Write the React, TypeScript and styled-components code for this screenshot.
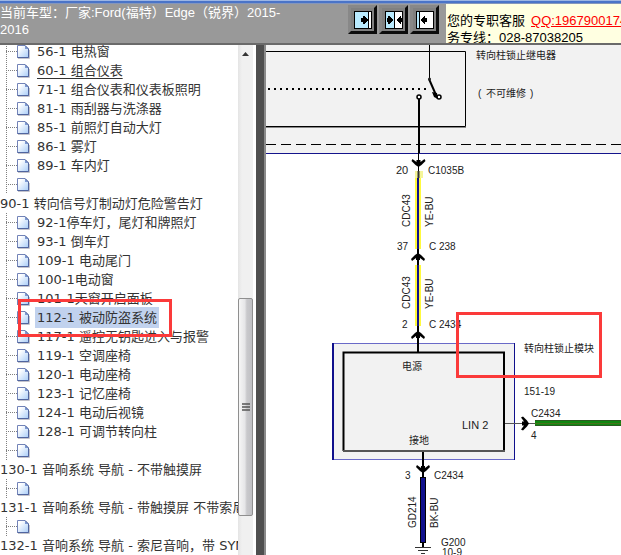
import React from 'react';
import styled, { createGlobalStyle } from 'styled-components';

const GlobalStyle = createGlobalStyle`
  * { box-sizing: border-box; }
  html, body { margin: 0; overflow: hidden; }
`;

const Page = styled.div`
  display: flex;
  flex-direction: column;
  height: 100vh;
  background: #fff;
  font-family: 'Liberation Sans', 'Noto Sans CJK SC', sans-serif;
  font-size: 13px;
  line-height: 17px;
`;

const TopEdge = styled.div`
  flex: none;
  height: 4px;
  background: linear-gradient(#9db6e4 0 1px, #4a74c8 1px 3px, #8496bc 3px);
`;

const Header = styled.header`
  display: flex;
  flex: none;
  height: 41px;
  overflow: hidden;
  background: #999;
  border-bottom: 2px solid #6a6a6a;
`;

const VehicleTitle = styled.h1`
  flex: 1;
  margin: 0;
  color: #fff;
  font-size: 13px;
  font-weight: 400;
  white-space: nowrap;
`;

const Toolbar = styled.div`
  display: flex;
  gap: 2px;
  padding: 1px 7px 0 0;
`;

const ToolButton = styled.button`
  display: flex;
  align-items: center;
  justify-content: center;
  width: 29px;
  height: 29px;
  padding: 0;
  background: #808080;
  border: 3px solid;
  border-color: #888 #0c0c0c #0c0c0c #888;
`;

const Contact = styled.div`
  width: 175px;
  padding-top: 8px;
  padding-left: 1px;
  overflow: hidden;
  background: #ffffe1;
  color: #000;
  white-space: nowrap;
`;

const ContactLine = styled.div`
  display: flex;
  gap: 6px;
`;

const QQLink = styled.a`
  color: #f00;
  text-decoration: underline;
`;

const Main = styled.main`
  display: flex;
  flex: 1;
  min-height: 0;
`;

const Sidebar = styled.aside`
  display: flex;
  flex: none;
  width: 256px;
  padding-right: 3px;
`;

const TreeView = styled.nav`
  flex: 1;
  min-width: 0;
  overflow: hidden;
  color: #333;
  font-family: 'DejaVu Sans', 'Noto Sans CJK SC', sans-serif;
  line-height: 19px;
  white-space: nowrap;
`;

const TreeGroups = styled.ul`
  margin: -3px 0 0;
  padding: 0;
  list-style: none;
`;

const GroupTitle = styled.div`
  height: 19px;
`;

const Leaves = styled.ul`
  margin: 0 0 0 6px;
  padding: 0;
  list-style: none;
  background: repeating-linear-gradient(#808080 0 1px, transparent 1px 2px) left / 1px 100% no-repeat;
`;

const Leaf = styled.li`
  display: flex;
  align-items: center;
  height: 19px;
`;

const Branch = styled.span`
  flex: none;
  width: 11px;
  height: 1px;
  background: repeating-linear-gradient(90deg, #808080 0 1px, transparent 1px 2px);
`;

const PageGlyph = styled.svg`
  flex: none;
  margin-right: 5px;
`;

const LeafLink = styled.a<{ $selected?: boolean; $underlined?: boolean }>`
  position: relative;
  padding: 0 2px;
  color: inherit;
  line-height: 21px;
  text-decoration: none;
  background: ${(p) => (p.$selected ? '#c1d2ee' : 'transparent')};
  ${(p) => p.$underlined && 'text-decoration: underline; text-underline-offset: 3px;'}
`;

const Marker = styled.span`
  position: absolute;
  z-index: 1;
  inset: -8px -13px -9px -17px;
  border: 3px solid #fb3a3a;
`;

const Scrollbar = styled.div`
  display: flex;
  flex: none;
  flex-direction: column;
  width: 15px;
  background: linear-gradient(90deg, #e4e4e4, #f0f0f0 4px);
`;

const ScrollArrow = styled.button`
  display: flex;
  align-items: center;
  justify-content: center;
  height: 17px;
  padding: 0;
  background: none;
  border: 0;
`;

const TrackPart = styled.div<{ $share: number }>`
  flex: ${(p) => p.$share} 0 0;
`;

const Thumb = styled.div`
  display: flex;
  flex: 217 0 0;
  align-items: center;
  justify-content: center;
  border: 1px solid #8f8f8f;
  border-radius: 2px;
  background: linear-gradient(90deg, #f6f6f6, #e6e6e8 45%, #c9c9cc 60%, #c0c0c4);
`;

const Splitter = styled.div`
  flex: none;
  width: 10px;
  background: #4f4f4f;
  border-right: 2px solid #8a8a8a;
`;

const DiagramPane = styled.section`
  flex: 1;
  min-width: 0;
  overflow: hidden;
  background: linear-gradient(#f2f2f2 108px, #fff 108px);
`;

const Drawing = styled.svg`
  display: block;
  fill: #222;
  font-family: 'Liberation Sans', 'Noto Sans CJK SC', sans-serif;
  font-size: 10px;
`;

interface LeafData {
  label: string;
  selected?: boolean;
  underlined?: boolean;
}

interface GroupData {
  title?: string;
  leaves: LeafData[];
}

const groups: GroupData[] = [
  {
    leaves: [
      { label: '56-1 电热窗' },
      { label: '60-1 组合仪表', underlined: true },
      { label: '71-1 组合仪表和仪表板照明' },
      { label: '81-1 雨刮器与洗涤器' },
      { label: '85-1 前照灯自动大灯' },
      { label: '86-1 雾灯' },
      { label: '89-1 车内灯' },
      { label: '' },
    ],
  },
  {
    title: '90-1 转向信号灯制动灯危险警告灯',
    leaves: [
      { label: '92-1停车灯，尾灯和牌照灯' },
      { label: '93-1 倒车灯' },
      { label: '109-1 电动尾门' },
      { label: '100-1电动窗' },
      { label: '101-1天窗开启面板' },
      { label: '112-1 被动防盗系统', selected: true },
      { label: '117-1 遥控无钥匙进入与报警' },
      { label: '119-1 空调座椅' },
      { label: '120-1 电动座椅' },
      { label: '123-1 记忆座椅' },
      { label: '124-1 电动后视镜' },
      { label: '128-1 可调节转向柱' },
      { label: '' },
    ],
  },
  { title: '130-1 音响系统 导航 - 不带触摸屏', leaves: [{ label: '' }] },
  { title: '131-1 音响系统 导航 - 带触摸屏 不带索尼', leaves: [{ label: '' }] },
  { title: '132-1 音响系统 导航 - 索尼音响，带 SYNC', leaves: [] },
];

function PageIcon() {
  return (
    <PageGlyph width="13" height="14" viewBox="0 0 13 14" aria-hidden="true">
      <defs>
        <linearGradient id="sheet" x1="0" y1="0" x2="1" y2="1">
          <stop offset="0.2" stopColor="#fff" />
          <stop offset="1" stopColor="#a9cdf8" />
        </linearGradient>
      </defs>
      <path d="M1 13.5H12.5V5" fill="none" stroke="#c4c4cc" />
      <path d="M0.5 0.5H8L11.5 4V12.5H0.5Z" fill="url(#sheet)" stroke="#7283b8" />
      <path d="M8 1V4H11Z" fill="#7d9bd6" />
      <path d="M8 0.5L11.5 4V12.5H0.5" fill="none" stroke="#50659f" />
    </PageGlyph>
  );
}

function PanelIcon({ kind }: { kind: 'right' | 'both' | 'left' }) {
  const split = { right: 14, both: 9, left: 3 }[kind];
  return (
    <svg width="18" height="18" viewBox="0 0 18 18" shapeRendering="crispEdges" aria-hidden="true">
      <rect x="0.5" y="0.5" width="17" height="17" fill="#fff" stroke="#000" />
      <rect x="1" y="1" width={split - 1} height="16" fill="#b9ebff" />
      <path d={`M${split + 0.5} 1V17`} stroke="#000" />
      {kind === 'right' && <path d="M7 7H9V5H10L14 9L10 13H9V11H7Z" />}
      {kind === 'both' && <path d="M2 7H3V5H4L8 9L4 13H3V11H2ZM17 7H16V5H15L11 9L15 13H16V11H17Z" />}
      {kind === 'left' && <path d="M11 7H9V5H8L4 9L8 13H9V11H11Z" />}
    </svg>
  );
}

function Arrow({ x, y, angle = 0 }: { x: number; y: number; angle?: number }) {
  return (
    <path
      transform={`translate(${x} ${y}) rotate(${angle})`}
      d="M0 1L-3 -1L-7 -5L-6 -7L-2 -4V-6H2V-4L6 -7L7 -5L3 -1Z"
      fill="#000"
    />
  );
}

function WiringDiagram() {
  return (
    <Drawing width="355" height="510" viewBox="266 45 355 510" role="img" aria-label="转向柱锁止模块电路图">
      <g fill="none" stroke="#000">
        <path d="M266 51.5H465.5V126.5H266" />
        <path d="M266 127.5H466" stroke="#888" />
        <path d="M268 89H428" strokeWidth="2" strokeDasharray="2 4" />
        <path d="M266 144.5H621" strokeDasharray="10 5" />
        <path d="M266 153.5H621" stroke="#14148c" />
        <path d="M429.5 45V79" />
        <path d="M429 79L436 95" strokeWidth="2" />
        <circle cx="439" cy="97" r="2" fill="#fff" strokeWidth="1.5" />
        <circle cx="419" cy="97" r="2" fill="#fff" strokeWidth="1.5" />
        <path d="M419 99V153" strokeWidth="2" />
        <path d="M418.5 153V176" />
      </g>
      <circle cx="429.5" cy="79" r="1.5" />
      <path d="M432 92L437 93L438 99L434 97Z" fill="#000" />
      <Arrow x={418.5} y={166} />

      <text x="476" y="59">转向柱锁止继电器</text>
      <text x="478" y="97">(</text>
      <text x="486" y="97">不可维修</text>
      <text x="530" y="97">)</text>

      <path d="M415 171H423V178H415Z" fill="#f5f59a" />
      <path d="M415 178H421V249H415ZM415 265H421V326H415Z" fill="#fffa3c" />
      <path d="M418 249V265M418 326V352" stroke="#000" strokeWidth="2" />
      <path d="M418.5 171V178" stroke="#333" strokeWidth="2" />
      <path d="M418 178V249M418 265V326" stroke="#10108c" strokeWidth="2" />
      <Arrow x={418} y={254} angle={180} />
      <Arrow x={418} y={332} angle={180} />

      <text x="396" y="174" fontSize="11">20</text>
      <text x="428" y="174">C1035B</text>
      <text x="397" y="250">37</text>
      <text x="429" y="250">C 238</text>
      <text x="402" y="328">2</text>
      <text x="429" y="328">C 2434</text>
      <text transform="translate(410 227) rotate(-90)">CDC43</text>
      <text transform="translate(433 227) rotate(-90)">YE-BU</text>
      <text transform="translate(410 309) rotate(-90)">CDC43</text>
      <text transform="translate(433 309) rotate(-90)">YE-BU</text>

      <rect x="332.5" y="343.5" width="182" height="116" fill="#f2f2f2" stroke="#6a6ac8" />
      <path d="M333 343V460" stroke="#10108c" strokeWidth="2" />
      <path d="M514.5 343V460" stroke="#10108c" />
      <path d="M343.5 451V352.5H504V451" fill="none" stroke="#000" strokeWidth="2" />
      <path d="M343 451H505" stroke="#555" strokeWidth="2" />
      <path d="M418 343V352" stroke="#000" strokeWidth="2" />
      <text x="402" y="370">电源</text>
      <text x="409" y="444">接地</text>
      <text x="462" y="429" fontSize="11">LIN 2</text>

      <text x="524" y="352">转向柱锁止模块</text>
      <text x="524" y="395">151-19</text>
      <text x="531" y="417">C2434</text>
      <text x="531" y="439">4</text>
      <path d="M505 423.5H535" stroke="#555" />
      <Arrow x={528} y={423.5} angle={-90} />
      <path d="M535 420H621V426H535Z" fill="#2a5a20" />
      <path d="M535 421H621V425H535Z" fill="#108810" />
      <path d="M535 423.5H621" stroke="#48701c" />

      <path d="M423 452V477M423 543V548" stroke="#000" strokeWidth="2" />
      <Arrow x={423} y={472} />
      <path d="M420 477H426V543H420Z" fill="#000" />
      <path d="M421 478H425V542H421Z" fill="#10108c" />
      <path d="M415 547.5H431M418 550.5H428M421 553.5H425" stroke="#333" />
      <text x="405" y="479">3</text>
      <text x="434" y="479">C2434</text>
      <text x="441" y="546">G200</text>
      <text x="442" y="556">10-9</text>
      <text transform="translate(416 528) rotate(-90)">GD214</text>
      <text transform="translate(438 528) rotate(-90)">BK-BU</text>

      <rect x="457.5" y="313.5" width="143" height="63" fill="none" stroke="#fb3a3a" strokeWidth="3" />
    </Drawing>
  );
}

export default function App() {
  return (
    <Page>
      <GlobalStyle />
      <TopEdge />
      <Header>
        <VehicleTitle>
          当前车型：厂家:Ford(福特）Edge（锐界）2015-
          <br />
          2016
        </VehicleTitle>
        <Toolbar>
          <ToolButton aria-label="展开目录"><PanelIcon kind="right" /></ToolButton>
          <ToolButton aria-label="平分窗口"><PanelIcon kind="both" /></ToolButton>
          <ToolButton aria-label="收起目录"><PanelIcon kind="left" /></ToolButton>
        </Toolbar>
        <Contact>
          <ContactLine>
            <span>您的专职客服</span>
            <QQLink href="#qq">QQ:1967900174</QQLink>
          </ContactLine>
          <ContactLine>务专线：028-87038205</ContactLine>
        </Contact>
      </Header>
      <Main>
        <Sidebar>
          <TreeView>
            <TreeGroups>
              {groups.map((group, g) => (
                <li key={g}>
                  {group.title && <GroupTitle>{group.title}</GroupTitle>}
                  <Leaves>
                    {group.leaves.map((leaf, i) => (
                      <Leaf key={i}>
                        <Branch />
                        <PageIcon />
                        {leaf.label && (
                          <LeafLink href={`#item-${g}-${i}`} $selected={leaf.selected} $underlined={leaf.underlined}>
                            {leaf.label}
                            {leaf.selected && <Marker />}
                          </LeafLink>
                        )}
                      </Leaf>
                    ))}
                  </Leaves>
                </li>
              ))}
            </TreeGroups>
          </TreeView>
          <Scrollbar>
            <ScrollArrow aria-label="向上滚动">
              <svg width="7" height="4" viewBox="0 0 7 4" aria-hidden="true">
                <path d="M0 4L3.5 0L7 4Z" fill="#333" />
              </svg>
            </ScrollArrow>
            <TrackPart $share={237} />
            <Thumb>
              <svg width="8" height="9" viewBox="0 0 8 9" aria-hidden="true">
                <path d="M0 1H8M0 4H8M0 7H8" stroke="#555" strokeWidth="1.5" />
              </svg>
            </Thumb>
            <TrackPart $share={39} />
          </Scrollbar>
        </Sidebar>
        <Splitter />
        <DiagramPane>
          <WiringDiagram />
        </DiagramPane>
      </Main>
    </Page>
  );
}
